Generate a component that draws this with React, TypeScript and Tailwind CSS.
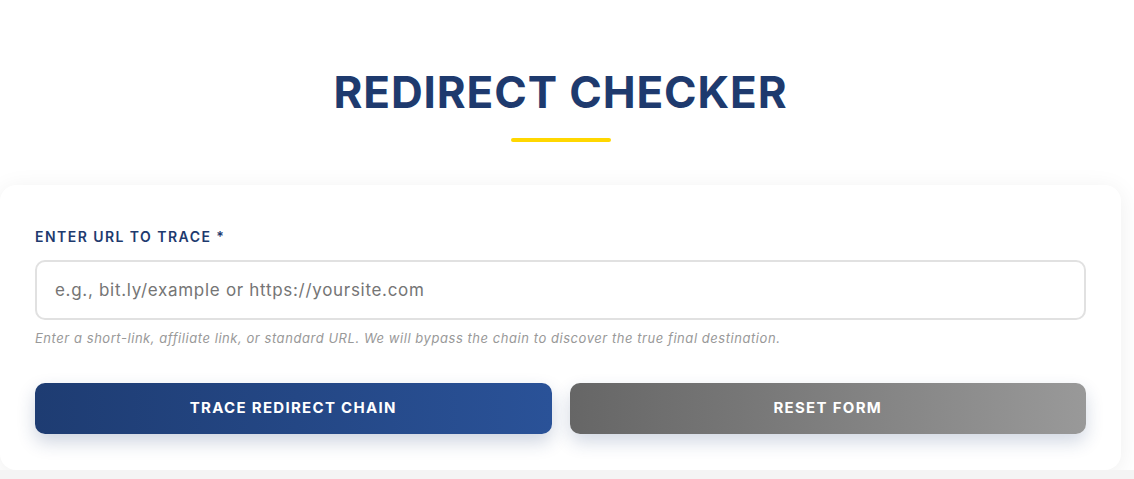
import { useState } from 'react';

export default function App() {
  const [url, setUrl] = useState('');

  return (
    <div className="min-h-[479px] bg-white font-['Inter','Noto_Sans',sans-serif] overflow-hidden">
      <div className="w-[1121px]">
        {/* Heading */}
        <div className="pt-[66px] flex flex-col items-center">
          <h1 className="text-[44px] leading-[52px] font-bold tracking-[0.9px] text-[#1e3a6e]">REDIRECT CHECKER</h1>
          <div className="mt-[20px] w-[100px] h-[4px] rounded-full bg-[#ffd700]" />
        </div>

        {/* Form card */}
        <div className="mt-[43px] bg-white rounded-2xl shadow-[0_4px_24px_rgba(0,0,0,0.07)] px-[35px] pt-[43px] pb-[36px]">
          <label className="block text-[14px] leading-[18px] font-semibold tracking-[1.45px] text-[#1e3a6e]">
            ENTER URL TO TRACE *
          </label>
          <input
            value={url}
            onChange={e => setUrl(e.target.value)}
            placeholder="e.g., bit.ly/example or https://yoursite.com"
            className="mt-[14px] w-full h-[60px] rounded-[10px] border-2 border-[#e1e1e1] px-[18px] text-[17px] tracking-[0.7px] text-[#333] placeholder:text-[#757575] outline-none"
          />
          <p className="mt-[10px] text-[13px] leading-[16px] italic tracking-[0.55px] text-[#999]">
            Enter a short-link, affiliate link, or standard URL. We will bypass the chain to discover the true final destination.
          </p>
          <div className="mt-[37px] grid grid-cols-2 gap-[18px]">
            <button className="h-[51px] rounded-[10px] bg-gradient-to-r from-[#1e3c72] to-[#2a5298] text-white text-[15px] font-bold tracking-[1.3px] shadow-[0_8px_18px_rgba(30,60,114,0.22)]">
              TRACE REDIRECT CHAIN
            </button>
            <button
              onClick={() => setUrl('')}
              className="h-[51px] rounded-[10px] bg-gradient-to-r from-[#666666] to-[#999999] text-white text-[15px] font-bold tracking-[1.3px] shadow-[0_8px_18px_rgba(30,60,114,0.2)]"
            >
              RESET FORM
            </button>
          </div>
        </div>
      </div>
      <div className="h-[20px] bg-[#f4f4f4]" />
    </div>
  );
}
